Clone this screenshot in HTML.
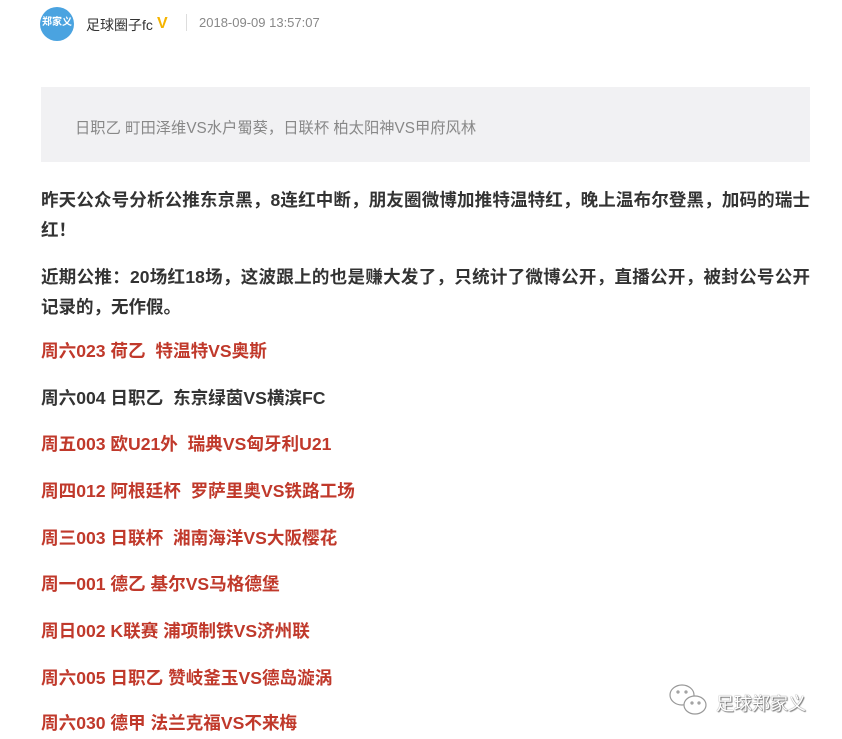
<!DOCTYPE html>
<html><head><meta charset="utf-8"><style>
body{margin:0;background:#fff;width:842px;height:739px;overflow:hidden;font-family:"Liberation Sans","Noto Sans CJK SC",sans-serif;position:relative}
.av{position:absolute;left:40px;top:7px;width:34px;height:34px;border-radius:50%;background:#4aa3e0;color:#fff;font-size:10px;font-weight:bold;text-align:center;line-height:32px}
.name{position:absolute;left:86px;top:15px;font-size:14px;color:#333}
.v{position:absolute;left:157px;top:15px;color:#f5b400;font-size:16px;font-weight:bold}
.sep{position:absolute;left:186px;top:14px;width:1px;height:17px;background:#ddd}
.time{position:absolute;left:199px;top:15px;font-size:13px;color:#888}
.box{position:absolute;left:41px;top:87px;width:769px;height:75px;background:#f1f1f3}
.box span{position:absolute;left:34px;top:29px;font-size:15.3px;color:#888}
.p{position:absolute;left:41px;width:769px;font-size:17.5px;font-weight:bold;color:#333;line-height:30px}
.j{text-align:justify;text-align-last:justify}
.r{position:absolute;left:41px;font-size:17.6px;font-weight:bold;color:#c0392b;line-height:24px}
.d{color:#333}
.wm{position:absolute;left:716px;top:690px;font-size:18px;color:#fff;text-shadow:0 0 1px #555,1px 1px 1px #777}
</style></head><body>
<div class="av">郑家义</div>
<div class="name">足球圈子fc</div>
<div class="v">V</div>
<div class="sep"></div>
<div class="time">2018-09-09 13:57:07</div>
<div class="box"><span>日职乙 町田泽维VS水户蜀葵，日联杯 柏太阳神VS甲府风林</span></div>
<div class="p" style="top:185px"><div class="j">昨天公众号分析公推东京黑，8连红中断，朋友圈微博加推特温特红，晚上温布尔登黑，加码的瑞士</div><div>红！</div></div>
<div class="p" style="top:262px"><div class="j">近期公推：20场红18场，这波跟上的也是赚大发了，只统计了微博公开，直播公开，被封公号公开</div><div>记录的，无作假。</div></div>
<div class="r" style="top:339px">周六023 荷乙&nbsp; 特温特VS奥斯</div>
<div class="r d" style="top:386px">周六004 日职乙&nbsp; 东京绿茵VS横滨FC</div>
<div class="r" style="top:432px">周五003 欧U21外&nbsp; 瑞典VS匈牙利U21</div>
<div class="r" style="top:479px">周四012 阿根廷杯&nbsp; 罗萨里奥VS铁路工场</div>
<div class="r" style="top:526px">周三003 日联杯&nbsp; 湘南海洋VS大阪樱花</div>
<div class="r" style="top:572px">周一001 德乙 基尔VS马格德堡</div>
<div class="r" style="top:619px">周日002 K联赛 浦项制铁VS济州联</div>
<div class="r" style="top:666px">周六005 日职乙 赞岐釜玉VS德岛漩涡</div>
<div class="r" style="top:711px">周六030 德甲 法兰克福VS不来梅</div>
<svg style="position:absolute;left:668px;top:683px" width="44" height="36" viewBox="0 0 44 36" fill="none" stroke="#999" stroke-width="1.2"><ellipse cx="14" cy="12" rx="12" ry="10"/><ellipse cx="27" cy="22" rx="11" ry="9" fill="#fff"/><circle cx="10" cy="9" r="1"/><circle cx="18" cy="9" r="1"/><circle cx="24" cy="20" r="1"/><circle cx="31" cy="20" r="1"/></svg>
<div class="wm">足球郑家义</div>
</body></html>
